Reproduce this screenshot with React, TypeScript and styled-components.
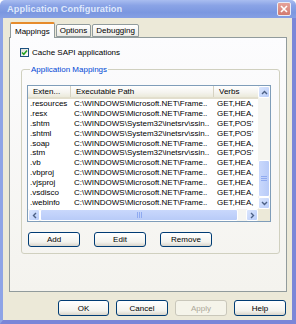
import React from "react";
import styled, { createGlobalStyle } from "styled-components";

const Global = createGlobalStyle`
  html, body { margin: 0; padding: 0; background: #ffffff; }
  body { font-family: "Liberation Sans", Arial, sans-serif; font-size: 8px; color: #000; }
  * { box-sizing: border-box; }
`;

const Window = styled.div`
  width: 296px;
  height: 324px;
  display: flex;
  flex-direction: column;
`;

const TitleBar = styled.div`
  height: 18px;
  flex: none;
  display: flex;
  align-items: center;
  justify-content: space-between;
  padding: 0 5px 0 7px;
  background: linear-gradient(#a9bdf0 0%, #8aa3e6 30%, #7b97e0 70%, #86a0e4 100%);
  border-radius: 5px 5px 0 0;
`;

const TitleText = styled.span`
  font-size: 9.2px;
  font-weight: bold;
  color: #dfe8fb;
  letter-spacing: 0.1px;
`;

const CloseBox = styled.div`
  width: 14px;
  height: 14px;
  border: 1px solid #e8ecf8;
  border-radius: 2px;
  background: linear-gradient(#e6a39a, #d27a70);
  display: flex;
  align-items: center;
  justify-content: center;
`;

const Frame = styled.div`
  flex: 1;
  display: flex;
  flex-direction: column;
  background: #ece9d8;
  border-left: 3px solid #8ea4e6;
  border-right: 4px solid #7a86d8;
  border-bottom: 4px solid #7a86d8;
  padding: 4px 5px 0 6px;
`;

const TabStrip = styled.div`
  display: flex;
  align-items: flex-end;
  height: 15px;
  padding-left: 1px;
  position: relative;
  z-index: 1;
`;

const Tab = styled.div<{ $active?: boolean }>`
  height: ${(p) => (p.$active ? "16px" : "13px")};
  margin-bottom: ${(p) => (p.$active ? "-1px" : "0")};
  margin-right: 1px;
  padding: 0 ${(p) => (p.$active ? "4px" : "3px")};
  display: flex;
  align-items: center;
  border: 1px solid #919b9c;
  border-bottom: ${(p) => (p.$active ? "none" : "1px solid #919b9c")};
  border-top: ${(p) => (p.$active ? "2px solid #e68b2c" : "1px solid #919b9c")};
  border-radius: 2px 2px 0 0;
  background: ${(p) => (p.$active ? "#fcfcfe" : "linear-gradient(#ffffff, #ecebe6)")};
  color: #000;
  font-size: 8px;
`;

const Panel = styled.div`
  height: 255px;
  border: 1px solid #919b9c;
  background: linear-gradient(#fcfcfe, #f4f3ee);
  padding: 9px 6px 0 10px;
  display: flex;
  flex-direction: column;
`;

const CheckRow = styled.label`
  display: flex;
  align-items: center;
  gap: 3px;
  height: 10px;
  font-size: 8px;
`;

const CheckBox = styled.span`
  width: 9px;
  height: 9px;
  border: 1px solid #1c5180;
  background: linear-gradient(135deg, #dcdcd7, #ffffff);
  display: flex;
  align-items: center;
  justify-content: center;
`;

const Group = styled.fieldset`
  margin: 8px 0 0 1px;
  padding: 11px 7px 6px 5px;
  border: 1px solid #d0d0bf;
  border-radius: 3px;
  min-width: 0;
`;

const Legend = styled.legend`
  font-size: 8px;
  line-height: 9px;
  color: #0046d5;
  padding: 0 1px;
  margin-left: 3px;
`;

const List = styled.div`
  width: 244px;
  height: 137px;
  border: 1px solid #7f9db9;
  background: #ffffff;
  display: grid;
  grid-template-columns: 1fr 12px;
  grid-template-rows: 1fr 12px;
`;

const ListBody = styled.div`
  overflow: hidden;
`;

const cols = "43px 143px 1fr";

const Header = styled.div`
  display: grid;
  grid-template-columns: ${cols};
  height: 13px;
  background: linear-gradient(#ffffff, #f4f3ee 60%, #ebeadb);
  border-bottom: 2px solid #e2decd;
`;

const HeadCell = styled.div<{ $last?: boolean }>`
  display: flex;
  align-items: center;
  padding-left: 5px;
  font-size: 8px;
  color: #000;
  white-space: nowrap;
  overflow: hidden;
  border-right: ${(p) => (p.$last ? "none" : "1px solid #d6d2c2")};
`;

const Row = styled.div`
  display: grid;
  grid-template-columns: ${cols};
  height: 9.9px;
  line-height: 9.9px;
`;

const Cell = styled.div<{ $pad: number }>`
  padding-left: ${(p) => p.$pad}px;
  white-space: nowrap;
  overflow: hidden;
  font-size: 8px;
  color: #000;
`;

const VScroll = styled.div`
  grid-row: 1;
  grid-column: 2;
  display: flex;
  flex-direction: column;
  background: #f3f3ef;
`;

const HScroll = styled.div`
  grid-row: 2;
  grid-column: 1;
  display: flex;
  background: #f3f3ef;
`;

const Corner = styled.div`
  grid-row: 2;
  grid-column: 2;
  background: #ece9d8;
`;

const ArrowBtn = styled.div`
  width: 12px;
  height: 12px;
  flex: none;
  border: 1px solid #ffffff;
  border-radius: 2px;
  background: linear-gradient(135deg, #dbe6fd, #b9cdfa);
  display: flex;
  align-items: center;
  justify-content: center;
`;

const Track = styled.div<{ $dir: "v" | "h" }>`
  flex: 1;
  display: flex;
  flex-direction: ${(p) => (p.$dir === "v" ? "column" : "row")};
  background: #f5f5f1;
`;

const Spacer = styled.div<{ $size: number }>`
  flex: 0 0 ${(p) => p.$size}px;
`;

const Thumb = styled.div<{ $dir: "v" | "h" }>`
  flex: 1;
  border: 1px solid #ffffff;
  border-radius: 2px;
  background: ${(p) =>
    p.$dir === "v" ? "linear-gradient(90deg, #c9d8fc, #b8cbf8)" : "linear-gradient(#c9d8fc, #b8cbf8)"};
  display: flex;
  align-items: center;
  justify-content: center;
`;

const ButtonRow = styled.div<{ $justify: string }>`
  display: flex;
  justify-content: ${(p) => p.$justify};
`;

const Button = styled.button<{ $w: number; $h: number; $disabled?: boolean }>`
  width: ${(p) => p.$w}px;
  height: ${(p) => p.$h}px;
  padding: 0;
  font-family: "Liberation Sans", Arial, sans-serif;
  font-size: 8px;
  border-radius: 3px;
  border: 1px solid ${(p) => (p.$disabled ? "#c9c7ba" : "#003c74")};
  background: ${(p) =>
    p.$disabled ? "#f5f4ea" : "linear-gradient(#ffffff, #f3f3ee 70%, #d9d5cb)"};
  color: ${(p) => (p.$disabled ? "#aca899" : "#000")};
`;

const GroupButtons = styled(ButtonRow)`
  margin-top: 10px;
  padding-left: 1px;
  gap: 14px;
`;

const DialogButtons = styled(ButtonRow)`
  margin-top: 8px;
  gap: 7px;
  padding-right: 1px;
`;

const Chevron = ({ dir }: { dir: "up" | "down" | "left" | "right" }) => {
  const rot = { up: 0, right: 90, down: 180, left: 270 }[dir];
  return (
    <svg width="7" height="7" viewBox="0 0 7 7" style={{ transform: `rotate(${rot}deg)` }}>
      <path d="M1 5 L3.5 2.5 L6 5" fill="none" stroke="#4d6185" strokeWidth="1.4" />
    </svg>
  );
};

const Grip = ({ dir }: { dir: "v" | "h" }) =>
  dir === "v" ? (
    <svg width="6" height="7" viewBox="0 0 6 7">
      <path d="M0 1.5H6M0 3.5H6M0 5.5H6" stroke="#8faaf0" strokeWidth="1" />
    </svg>
  ) : (
    <svg width="7" height="6" viewBox="0 0 7 6">
      <path d="M1.5 0V6M3.5 0V6M5.5 0V6" stroke="#8faaf0" strokeWidth="1" />
    </svg>
  );

const MS = "C:\\WINDOWS\\Microsoft.NET\\Frame..";
const SS = "C:\\WINDOWS\\System32\\inetsrv\\ssin..";
const GH = "GET,HEA,";
const GP = "GET,POS'";

const rows: [string, string, string][] = [
  [".resources", MS, GH],
  [".resx", MS, GH],
  [".shtm", SS, GP],
  [".shtml", SS, GP],
  [".soap", MS, GH],
  [".stm", SS, GP],
  [".vb", MS, GH],
  [".vbproj", MS, GH],
  [".vjsproj", MS, GH],
  [".vsdisco", MS, GH],
  [".webinfo", MS, GH],
];

export default function App() {
  return (
    <>
      <Global />
      <Window>
        <TitleBar>
          <TitleText>Application Configuration</TitleText>
          <CloseBox>
            <svg width="8" height="8" viewBox="0 0 8 8">
              <path d="M1 1L7 7M7 1L1 7" stroke="#ffffff" strokeWidth="1.6" />
            </svg>
          </CloseBox>
        </TitleBar>
        <Frame>
          <TabStrip>
            <Tab $active>Mappings</Tab>
            <Tab>Options</Tab>
            <Tab>Debugging</Tab>
          </TabStrip>
          <Panel>
            <CheckRow>
              <CheckBox>
                <svg width="7" height="7" viewBox="0 0 7 7">
                  <path d="M1 3.5L2.8 5.3L6 1.6" fill="none" stroke="#21a121" strokeWidth="1.5" />
                </svg>
              </CheckBox>
              Cache SAPI applications
            </CheckRow>
            <Group>
              <Legend>Application Mappings</Legend>
              <List>
                <ListBody>
                  <Header>
                    <HeadCell>Exten...</HeadCell>
                    <HeadCell>Executable Path</HeadCell>
                    <HeadCell $last>Verbs</HeadCell>
                  </Header>
                  {rows.map(([ext, path, verbs]) => (
                    <Row key={ext}>
                      <Cell $pad={2}>{ext}</Cell>
                      <Cell $pad={3}>{path}</Cell>
                      <Cell $pad={3}>{verbs}</Cell>
                    </Row>
                  ))}
                </ListBody>
                <VScroll>
                  <ArrowBtn>
                    <Chevron dir="up" />
                  </ArrowBtn>
                  <Track $dir="v">
                    <Spacer $size={62} />
                    <Thumb $dir="v">
                      <Grip dir="v" />
                    </Thumb>
                  </Track>
                  <ArrowBtn>
                    <Chevron dir="down" />
                  </ArrowBtn>
                </VScroll>
                <HScroll>
                  <ArrowBtn>
                    <Chevron dir="left" />
                  </ArrowBtn>
                  <Track $dir="h">
                    <Thumb $dir="h">
                      <Grip dir="h" />
                    </Thumb>
                    <Spacer $size={8} />
                  </Track>
                  <ArrowBtn>
                    <Chevron dir="right" />
                  </ArrowBtn>
                </HScroll>
                <Corner />
              </List>
              <GroupButtons $justify="flex-start">
                <Button $w={52} $h={15}>Add</Button>
                <Button $w={52} $h={15}>Edit</Button>
                <Button $w={52} $h={15}>Remove</Button>
              </GroupButtons>
            </Group>
          </Panel>
          <DialogButtons $justify="flex-end">
            <Button $w={51} $h={16}>OK</Button>
            <Button $w={52} $h={16}>Cancel</Button>
            <Button $w={52} $h={16} $disabled>Apply</Button>
            <Button $w={52} $h={16}>Help</Button>
          </DialogButtons>
        </Frame>
      </Window>
    </>
  );
}
